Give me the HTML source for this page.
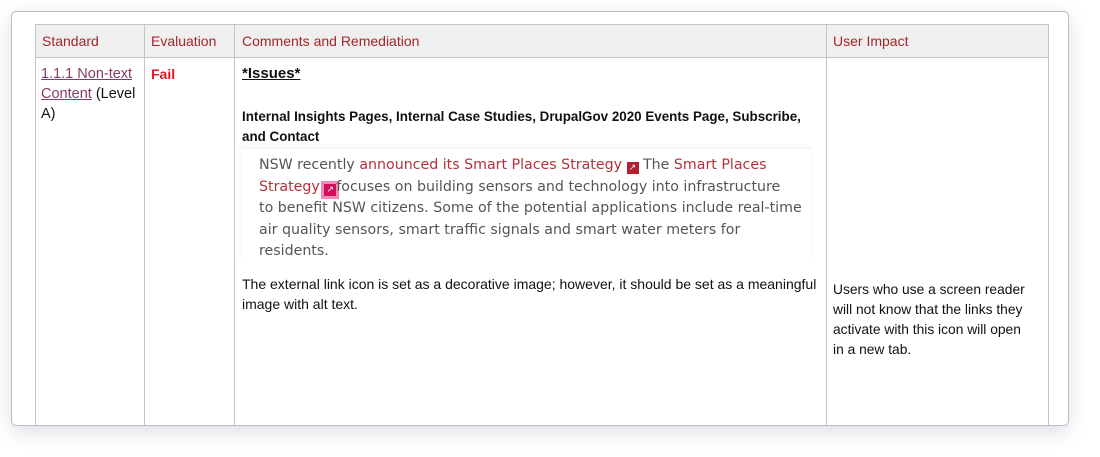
<!DOCTYPE html>
<html><head><style>
body{margin:0;width:1100px;height:457px;background:#fff;position:relative;overflow:hidden;font-family:"Liberation Sans",sans-serif;}
.card{position:absolute;left:11px;top:11px;width:1056px;height:413px;border:1px solid #b9bcc4;border-radius:5px;box-shadow:0 6px 18px rgba(60,70,100,.18);background:#fff;overflow:hidden;}
.t{position:absolute;left:23px;top:12px;width:1012px;height:420px;border:1px solid #c4c4c4;}
.hd{position:absolute;left:0;top:0;width:1012px;height:32px;background:#efefef;border-bottom:1px solid #c4c4c4;}
.v{position:absolute;top:0;width:1px;height:420px;background:#c4c4c4;}
.h{position:absolute;top:8px;color:#a3262b;font-size:14px;}
.c{position:absolute;font-size:13px;line-height:20px;color:#111;white-space:nowrap;}
.shot{position:absolute;left:205px;top:124px;width:570px;height:114px;background:#fff;box-shadow:0 -3px 4px rgba(0,0,0,.05);}
.shot p{margin:0;position:absolute;left:18px;top:6px;font-family:"DejaVu Sans",sans-serif;font-size:14.2px;line-height:21.5px;color:#555;white-space:nowrap;}
.r{color:#b4303a;}
.ic{display:inline-block;width:12px;height:12px;background:#b02030;color:#fff;font-size:9px;line-height:12px;text-align:center;vertical-align:-1px;}
</style></head><body>
<div class="card">
<div class="t">
<div class="hd"></div>
<div class="v" style="left:108px"></div>
<div class="v" style="left:198px"></div>
<div class="v" style="left:790px"></div>
<div class="h" style="left:6px">Standard</div>
<div class="h" style="left:115px">Evaluation</div>
<div class="h" style="left:206px">Comments and Remediation</div>
<div class="h" style="left:797px">User Impact</div>
<div class="c" style="left:5px;top:39px;font-size:14.5px"><span style="color:#8a3a66;text-decoration:underline">1.1.1 Non-text<br>Content</span> (Level<br>A)</div>
<div class="c" style="left:115px;top:39px;color:#e8141e;font-weight:bold;font-size:14px">Fail</div>
<div class="c" style="left:206px;top:39px;font-weight:bold;font-size:15px;text-decoration:underline">*Issues*</div>
<div class="c" style="left:206px;top:82px;font-weight:bold;font-size:13.4px">Internal Insights Pages, Internal Case Studies, DrupalGov 2020 Events Page, Subscribe,<br>and Contact</div>
<div class="shot"><p>NSW recently <span class="r">announced its Smart Places Strategy</span> <span class="ic">↗</span> The <span class="r">Smart Places</span><br><span class="r">Strategy</span> <span class="ic" style="background:#d0105a;box-shadow:0 0 0 3px #f08ab8">↗</span>focuses on building sensors and technology into infrastructure<br>to benefit NSW citizens. Some of the potential applications include real-time<br>air quality sensors, smart traffic signals and smart water meters for<br>residents.</p></div>
<div class="c" style="left:206px;top:249px;font-size:14px;letter-spacing:0">The external link icon is set as a decorative image; however, it should be set as a meaningful<br>image with alt text.</div>
<div class="c" style="left:797px;top:255px;font-size:13.8px;letter-spacing:0">Users who use a screen reader<br>will not know that the links they<br>activate with this icon will open<br>in a new tab.</div>
</div>
</div>
</body></html>
